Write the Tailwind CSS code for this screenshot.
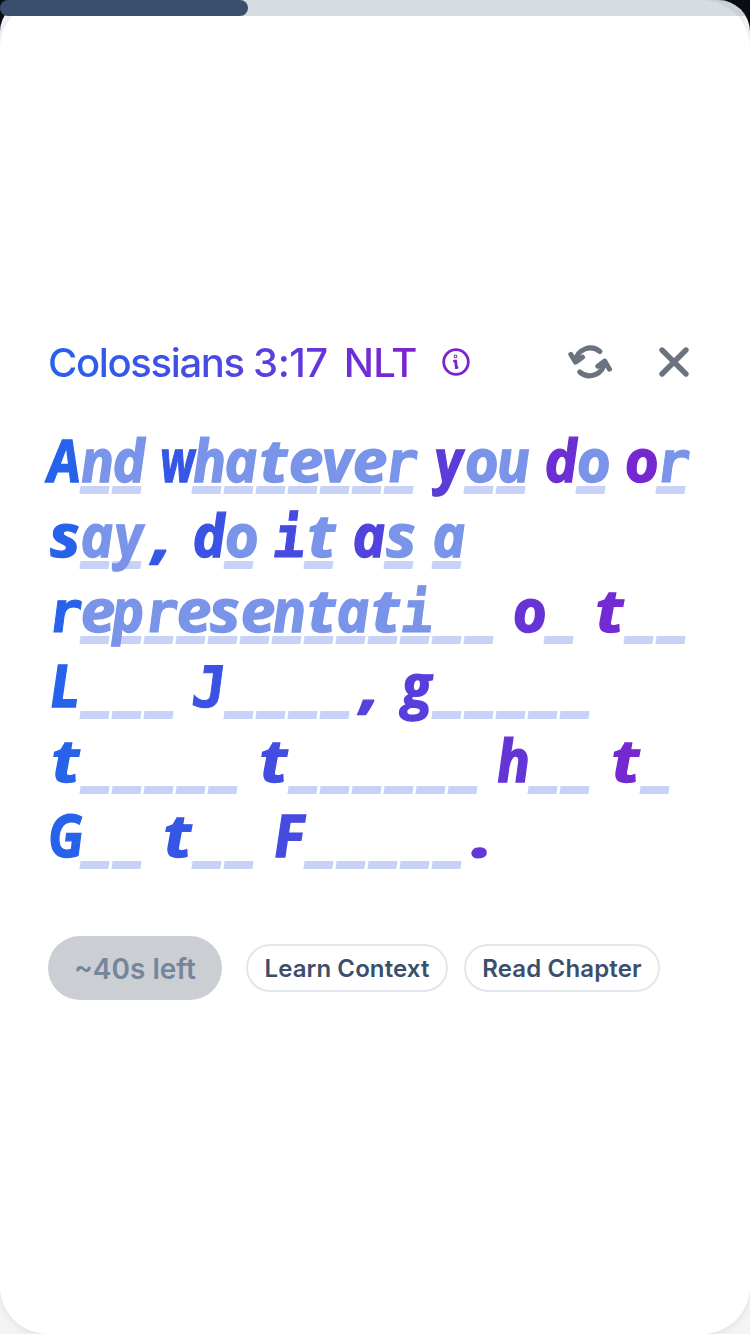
<!DOCTYPE html>
<html lang="en">
<head>
<meta charset="utf-8">
<title>Colossians 3:17</title>
<script src="https://cdn.jsdelivr.net/npm/@tailwindcss/browser@4"></script>
</head>
<body class="bg-[#080c14]">
<div class="h-[1334px] w-[750px] overflow-hidden rounded-t-[32px] bg-[#f3f4f6] font-['Inter','Liberation_Sans',sans-serif]">
  <main class="relative flex h-[1334px] flex-col rounded-[48px] bg-white shadow-[0_2px_8px_rgba(0,0,0,0.08)]">
    <div class="absolute top-0 left-0 h-4 w-full bg-[rgb(55,80,100)]/20"></div>
    <header class="mt-[332px] flex h-[60px] items-center pl-12">
      <h1 class="w-[368px] shrink-0 bg-[linear-gradient(to_right,#2563eb,#4f46e5_50%,#7e22ce)] bg-clip-text pt-[2px] text-[40px] leading-[60px] font-medium tracking-[-1.35px] whitespace-pre text-transparent">Colossians <span class="tracking-[-0.5px]">3:17</span><span class="ml-[16px] tracking-[-0.8px]">NLT</span></h1>
      <svg class="mb-[1px] ml-[24px] size-8 shrink-0" viewBox="440 345 32 32" fill="none" stroke="#7e22ce" stroke-width="2.8" stroke-linecap="round"><circle cx="456" cy="361" r="12.3"/><path d="M454.4 360.2h1.3l.6 6.3h.8"/><circle cx="455.5" cy="355.4" r=".5"/></svg>
      <svg class="ml-[94px] h-12 w-12 shrink-0" viewBox="566 338 48 48" fill="none" stroke="#6b7280" stroke-width="5" stroke-linecap="round" stroke-linejoin="round"><path d="M600 351.5A15 15 0 0 0 575.5 361M570.8 354.3l4.7 7.8 7-5M579.7 372A15 15 0 0 0 604.5 362M597.8 366.3l6.9-5.2 4.8 8.1"/></svg>
      <svg class="ml-[36px] h-12 w-12 shrink-0" viewBox="650 338 48 48" fill="none" stroke="#6b7280" stroke-width="5.4" stroke-linecap="round"><path d="m662 350 24 24M686 350l-24 24"/></svg>
    </header>
    <section id="verse" class="mt-[32px] ml-12 flex h-[450px] flex-col"></section>
    <footer class="mt-[62px] ml-12 flex h-16 items-center">
      <div class="flex h-16 w-[174px] items-center justify-center rounded-full bg-[#cbcfd4] pt-[1px] text-[28px] font-semibold text-[#75859a]">~40s left</div>
      <button class="ml-6 h-12 w-[202px] rounded-full border-2 border-[#e3e6eb] pt-[2px] text-[24px] font-semibold tracking-[0.1px] text-[#3a4f6c]">Learn Context</button>
      <button class="ml-4 h-12 w-[196px] rounded-full border-2 border-[#e3e6eb] pt-[2px] text-[24px] font-semibold tracking-[0.15px] text-[#3a4f6c]">Read Chapter</button>
    </footer>
  </main>
</div>
<div class="absolute top-0 left-0 h-4 w-[248px] rounded-full bg-[#3a4f6c]"></div>
<script>
// "|" precedes each revealed letter; "_" is a letter still to be typed.
const lines = ["|And |whatever |you |do |or", "|say|, |do |it |as a", "|representati__ |o_ |t__", "|L___ |J____|, |g_____", "|t_____ |t______ |h__ |t_", "|G__ |t__ |F_____|."];
// Horizontal fit of each glyph to the 32px cell.
const fit = {A:.9, w:.74, h:.95, n:.95, d:.96, a:.96, u:.95, y:.92, o:1, e:1.08, v:1, s:1.1, t:1.16, p:.94, g:.96, G:.88, L:.98, J:.98, F:1, r:.98, i:.96, ",":1.2, ".":1.35};
const shift = {A:-1, L:-1, F:0, ".":0, ",":0, t:0, y:-1, p:-1, g:-1, s:-.5};
const verse = document.getElementById("verse");
for (const line of lines) {
  const row = document.createElement("div");
  row.className = "flex h-[75px]";
  let x = 0, hint = false;
  for (const c of line) {
    if (c === "|") { hint = true; continue; }
    const cell = document.createElement("span");
    if (c === " ") {
      cell.className = "w-4 shrink-0"; x += 16;
    } else {
      cell.className = "relative flex w-8 shrink-0 justify-center";
      if (!hint) {
        const bar = document.createElement("span");
        bar.className = "absolute top-[62px] left-[-0.5px] h-[8px] w-[29px] -skew-x-8 bg-[#c8d2f6]";
        cell.append(bar);
      }
      if (c !== "_") {
        const g = document.createElement("span");
        const slab = "irJ".includes(c);
        g.className = slab ? "relative inline-block h-[75px] origin-[50%_58px] text-[57px] leading-[77px] font-bold italic font-['DejaVu_Sans_Mono',monospace] [-webkit-text-stroke:1px]" : "relative inline-block h-[75px] origin-[50%_58px] text-[59px] leading-[70px] font-bold italic font-['Open_Sans','Noto_Sans',sans-serif] [-webkit-text-stroke:1.3px]";
        g.textContent = c;
        const t = Math.min(1, (x + 12) / 640);
        g.style.color = hint ? `rgb(${37 + 89 * t},${99 - 65 * t},${235 - 29 * t})` : "#7994e9";
        g.style.transform = `translateX(${2.5 + (shift[c] || 0)}px) skewX(3.5deg) scaleX(${fit[c] || 1})`;
        cell.append(g);
      }
      x += 32;
    }
    row.append(cell);
    hint = false;
  }
  verse.append(row);
}
</script>
</body>
</html>
